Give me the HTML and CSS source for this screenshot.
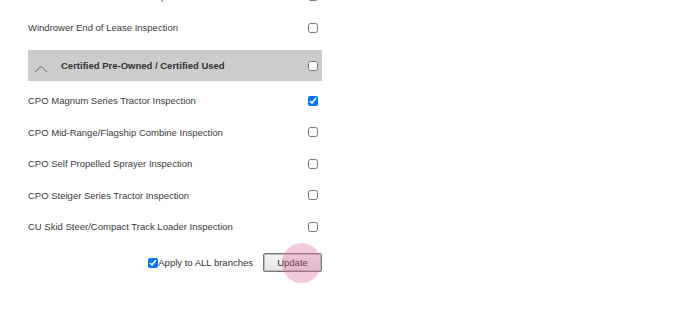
FILE: index.html
```html
<!DOCTYPE html>
<html lang="en">
<head>
  <meta charset="UTF-8">
  <title>Inspections</title>
  <link rel="stylesheet" href="styles.css">
</head>
<body>
<div id="list">
  <div class="row">
    <span>Wheel Loader End of Lease Inspection</span>
    <input type="checkbox" class="chk">
  </div>
  <div class="row">
    <span>Windrower End of Lease Inspection</span>
    <input type="checkbox" class="chk">
  </div>
  <div class="group_head">
    <svg class="chevron" width="14" height="8" viewBox="0 0 14 8">
      <polyline points="1,7 7,1.5 13,7" fill="none" stroke="#6b6b6b" stroke-width="1"/>
    </svg>
    <span class="group_title">Certified Pre-Owned / Certified Used</span>
    <input type="checkbox" class="chk">
  </div>
  <div class="row">
    <span>CPO Magnum Series Tractor Inspection</span>
    <input type="checkbox" class="chk" checked>
  </div>
  <div class="row">
    <span>CPO Mid-Range/Flagship Combine Inspection</span>
    <input type="checkbox" class="chk">
  </div>
  <div class="row">
    <span>CPO Self Propelled Sprayer Inspection</span>
    <input type="checkbox" class="chk">
  </div>
  <div class="row">
    <span>CPO Steiger Series Tractor Inspection</span>
    <input type="checkbox" class="chk">
  </div>
  <div class="row">
    <span>CU Skid Steer/Compact Track Loader Inspection</span>
    <input type="checkbox" class="chk">
  </div>
  <div id="footer">
    <label class="apply"><input type="checkbox" class="chk" checked>Apply to ALL branches</label>
    <div class="btn_wrap">
      <button id="btn">Update</button>
      <div class="click_dot"></div>
    </div>
  </div>
</div>
</body>
</html>
```

FILE: styles.css
```css
body {
  margin: 0;
  background: #fff;
  font-family: "Liberation Sans", Arial, sans-serif;
  font-size: 9.5px;
  color: #3a3a3a;
}
#list {
  width: 294px;
  margin: -19.5px 0 0 28px;
  padding-bottom: 40px;
}
.row {
  height: 31.5px;
  display: flex;
  align-items: center;
  justify-content: space-between;
}
.chk {
  width: 10px;
  height: 10px;
  margin: 0 4px 0 0;
  accent-color: #0075ff;
}
.group_head {
  height: 31px;
  margin: 6.5px 0 4px;
  background: #cccccc;
  display: flex;
  align-items: center;
}
.chevron {
  margin: 6px 0 0 6px;
}
.group_title {
  font-weight: bold;
  margin-left: 13px;
  flex: 1;
  color: #333;
}
#footer {
  display: flex;
  justify-content: flex-end;
  align-items: center;
  margin-top: 10.5px;
}
.apply {
  display: flex;
  align-items: center;
  margin-right: 10px;
  color: #333;
}
.apply .chk {
  margin: 0 0 0 2px;
}
.btn_wrap {
  position: relative;
  height: 19px;
}
button {
  display: block;
  width: 59px;
  height: 19px;
  padding: 0;
  font-family: "Liberation Sans", Arial, sans-serif;
  font-size: 9.5px;
  color: #222;
  background: linear-gradient(#f6f6f6, #e3e3e3);
  border: 1px solid #777;
  border-radius: 2px;
  box-shadow: inset 0 0 0 1px #bbb;
}
.click_dot {
  position: absolute;
  z-index: 2;
  left: 19px;
  top: -10px;
  width: 39px;
  height: 40px;
  border-radius: 50%;
  background: rgba(226, 110, 165, 0.38);
  pointer-events: none;
}
```
